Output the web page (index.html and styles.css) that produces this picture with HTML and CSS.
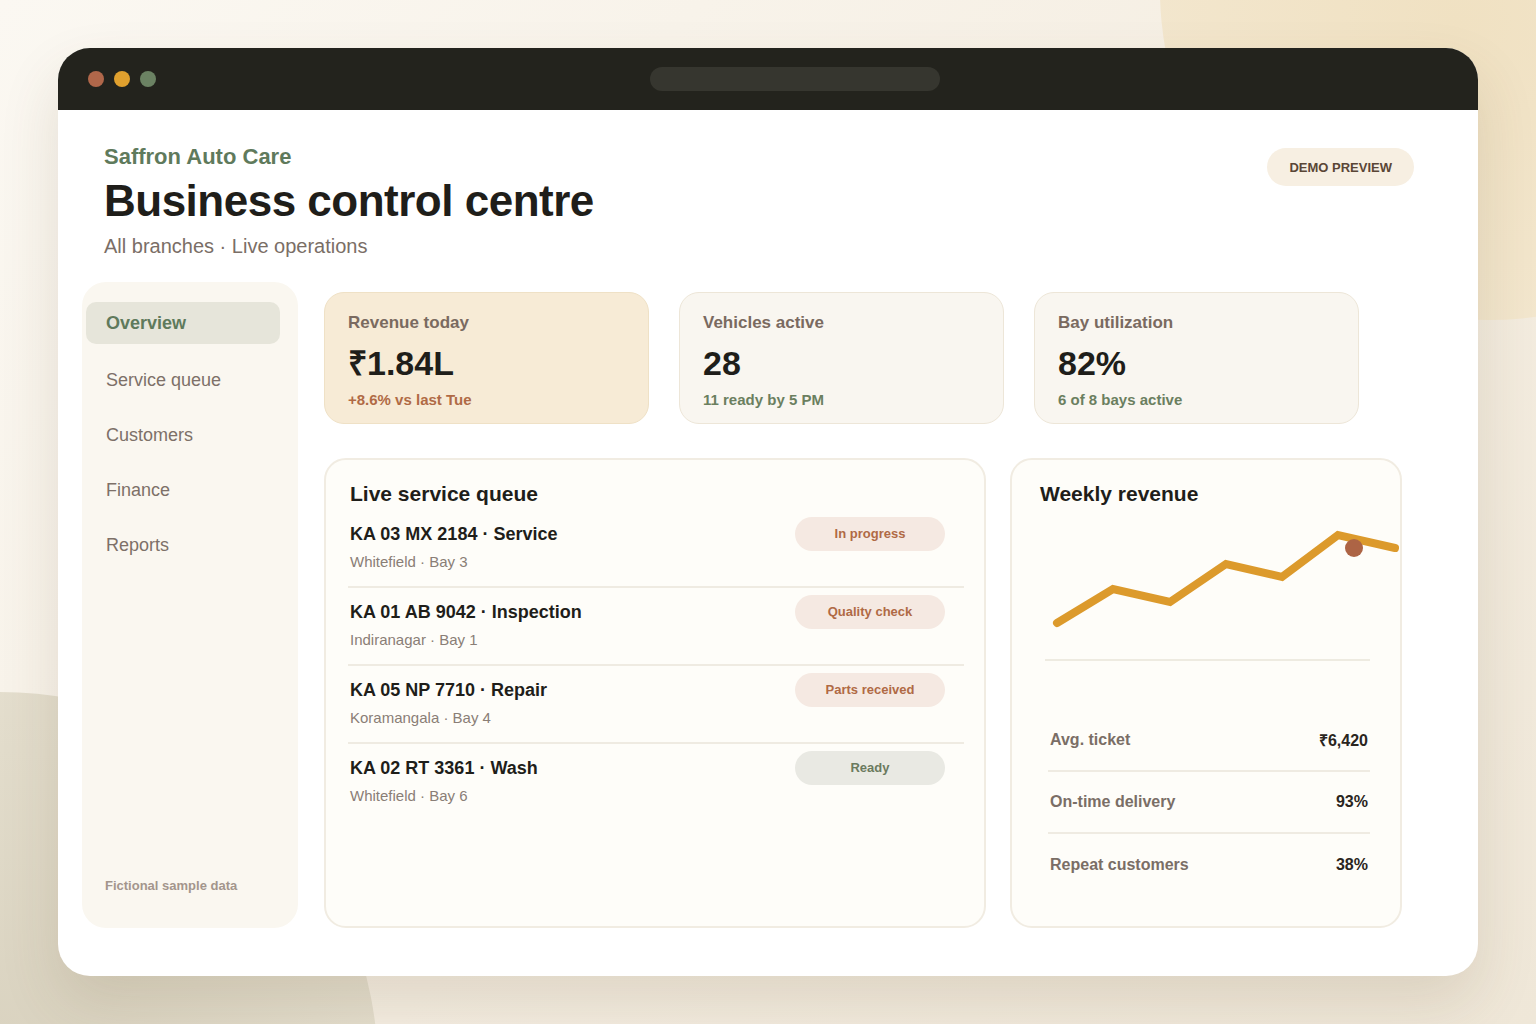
FILE: index.html
```html
<!DOCTYPE html>
<html lang="en">
<head>
    <meta charset="UTF-8">
    <meta name="viewport" content="width=device-width, initial-scale=1.0">
    <title>Saffron Auto Care — Business control centre</title>
    <link rel="stylesheet" href="styles.css">
</head>
<body>

    <div class="backdrop">
        <div class="blob blob-sun"></div>
        <div class="blob blob-sand"></div>

        <div class="window">
            <!-- Window chrome -->
            <div class="titlebar">
                <div class="dots">
                    <span class="dot dot-red"></span>
                    <span class="dot dot-amber"></span>
                    <span class="dot dot-green"></span>
                </div>
                <div class="address"></div>
            </div>

            <div class="content">
                <header class="page-head">
                    <div>
                        <div class="brand">Saffron Auto Care</div>
                        <h1 class="page-title">Business control centre</h1>
                        <p class="subtitle">All branches · Live operations</p>
                    </div>
                    <span class="demo-pill">Demo preview</span>
                </header>

                <div class="layout">
                    <!-- Side navigation -->
                    <aside class="sidebar">
                        <nav class="nav">
                            <a class="nav-item active" href="#">Overview</a>
                            <a class="nav-item" href="#">Service queue</a>
                            <a class="nav-item" href="#">Customers</a>
                            <a class="nav-item" href="#">Finance</a>
                            <a class="nav-item" href="#">Reports</a>
                        </nav>
                        <div class="sidebar-note">Fictional sample data</div>
                    </aside>

                    <main class="main">
                        <!-- KPI cards -->
                        <div class="stats">
                            <div class="stat-card highlight">
                                <div class="stat-label">Revenue today</div>
                                <div class="stat-value">₹1.84L</div>
                                <div class="stat-note up">+8.6% vs last Tue</div>
                            </div>
                            <div class="stat-card">
                                <div class="stat-label">Vehicles active</div>
                                <div class="stat-value">28</div>
                                <div class="stat-note">11 ready by 5 PM</div>
                            </div>
                            <div class="stat-card">
                                <div class="stat-label">Bay utilization</div>
                                <div class="stat-value">82%</div>
                                <div class="stat-note">6 of 8 bays active</div>
                            </div>
                        </div>

                        <div class="panels">
                            <!-- Queue -->
                            <section class="panel queue">
                                <h2 class="panel-title">Live service queue</h2>
                                <ul class="queue-list">
                                    <li class="queue-row">
                                        <div>
                                            <div class="job-title">KA 03 MX 2184 · Service</div>
                                            <div class="job-meta">Whitefield · Bay 3</div>
                                        </div>
                                        <span class="badge">In progress</span>
                                    </li>
                                    <li class="queue-row">
                                        <div>
                                            <div class="job-title">KA 01 AB 9042 · Inspection</div>
                                            <div class="job-meta">Indiranagar · Bay 1</div>
                                        </div>
                                        <span class="badge">Quality check</span>
                                    </li>
                                    <li class="queue-row">
                                        <div>
                                            <div class="job-title">KA 05 NP 7710 · Repair</div>
                                            <div class="job-meta">Koramangala · Bay 4</div>
                                        </div>
                                        <span class="badge">Parts received</span>
                                    </li>
                                    <li class="queue-row">
                                        <div>
                                            <div class="job-title">KA 02 RT 3361 · Wash</div>
                                            <div class="job-meta">Whitefield · Bay 6</div>
                                        </div>
                                        <span class="badge ready">Ready</span>
                                    </li>
                                </ul>
                            </section>

                            <!-- Weekly revenue -->
                            <section class="panel weekly">
                                <h2 class="panel-title">Weekly revenue</h2>
                                <svg class="chart" width="332" height="150" viewBox="0 0 332 150">
                                    <line x1="5" y1="140" x2="330" y2="140" stroke="#eeebe1" stroke-width="2"/>
                                    <polyline points="17,103 73,69 130,82 186,44 242,57 298,15 355,28"
                                              fill="none" stroke="#dc9a2c" stroke-width="8"
                                              stroke-linecap="round" stroke-linejoin="miter"/>
                                    <circle cx="314" cy="28" r="9" fill="#ad6445"/>
                                </svg>
                                <ul class="figures">
                                    <li><span>Avg. ticket</span><strong>₹6,420</strong></li>
                                    <li><span>On-time delivery</span><strong>93%</strong></li>
                                    <li><span>Repeat customers</span><strong>38%</strong></li>
                                </ul>
                            </section>
                        </div>
                    </main>
                </div>
            </div>
        </div>
    </div>

</body>
</html>
```

FILE: styles.css
```css
* {
    box-sizing: border-box;
}
body {
    margin: 0;
    padding: 0;
    font-family: "Liberation Sans", Arial, sans-serif;
    color: #1f1e1a;
    background: #f6f0e5;
}
.backdrop {
    position: relative;
    width: 1536px;
    height: 1024px;
    overflow: hidden;
    padding: 48px 58px;
    background: linear-gradient(135deg, #fbf8f2 0%, #f5eee2 55%, #efe7d8 100%);
}

/* soft shapes behind the window */
.blob {
    position: absolute;
    border-radius: 50%;
}
.blob-sun {
    left: 1160px;
    top: -340px;
    width: 660px;
    height: 660px;
    background: radial-gradient(circle at 45% 55%, #f0e1c2 0%, #f3e7cf 70%, #f2e6cc 100%);
}
.blob-sand {
    left: -378px;
    top: 692px;
    width: 756px;
    height: 756px;
    background: radial-gradient(circle at 50% 50%, #d9d2bf 0%, #e2dccb 60%, #e8e2d3 100%);
}

.window {
    position: relative;
    width: 1420px;
    height: 928px;
    background: white;
    border-radius: 32px;
    overflow: hidden;
    box-shadow: 0 28px 60px rgba(90, 70, 35, 0.14);
    display: flex;
    flex-direction: column;
}
.titlebar {
    height: 62px;
    flex-shrink: 0;
    background: #23231d;
    display: flex;
    align-items: center;
    padding-left: 30px;
}
.dots {
    display: flex;
    gap: 10px;
}
.dot {
    width: 16px;
    height: 16px;
    border-radius: 50%;
}
.dot-red { background: #b0674a; }
.dot-amber { background: #e0a02e; }
.dot-green { background: #6b8263; }
.address {
    margin-left: 494px;
    width: 290px;
    height: 24px;
    border-radius: 12px;
    background: #36362f;
}

.content {
    flex: 1;
    display: flex;
    flex-direction: column;
}
.page-head {
    display: flex;
    justify-content: space-between;
    align-items: flex-start;
    padding: 34px 64px 0 46px;
}
.brand {
    font-size: 22px;
    line-height: 26px;
    font-weight: bold;
    color: #5f7a5c;
}
.page-title {
    margin: 6px 0 0;
    font-size: 44px;
    line-height: 50px;
    font-weight: bold;
    letter-spacing: -0.5px;
    color: #1f1e1a;
}
.subtitle {
    margin: 8px 0 0;
    font-size: 20px;
    line-height: 24px;
    color: #7a6e66;
}
.demo-pill {
    margin-top: 4px;
    padding: 2px 22px 0;
    height: 38px;
    line-height: 36px;
    border-radius: 19px;
    background: #f7efe2;
    color: #5a4636;
    font-size: 13px;
    font-weight: bold;
    text-transform: uppercase;
}

.layout {
    flex: 1;
    display: grid;
    grid-template-columns: 216px 1fr;
    gap: 26px;
    padding: 24px 76px 48px 24px;
}

/* sidebar */
.sidebar {
    background: #faf7f0;
    border-radius: 24px;
    padding: 20px 18px 35px 4px;
    display: flex;
    flex-direction: column;
}
.nav {
    display: flex;
    flex-direction: column;
    gap: 13px;
}
.nav-item {
    display: block;
    height: 42px;
    line-height: 42px;
    padding-left: 20px;
    border-radius: 10px;
    font-size: 18px;
    color: #7d7068;
    text-decoration: none;
}
.nav-item.active {
    margin-bottom: 2px;
    background: #e6e5da;
    color: #5f7a5c;
    font-weight: bold;
}
.sidebar-note {
    margin-top: auto;
    padding-left: 19px;
    font-size: 13px;
    font-weight: bold;
    color: #a3958c;
}

/* main column */
.main {
    display: flex;
    flex-direction: column;
    padding-top: 10px;
}
.stats {
    display: grid;
    grid-template-columns: repeat(3, 325px);
    gap: 30px;
}
.stat-card {
    height: 132px;
    padding: 19px 23px 0;
    border-radius: 20px;
    background: #f9f6f0;
    border: 1px solid #ede6d8;
}
.stat-card.highlight {
    background: #f7ebd6;
    border-color: #efe1c6;
}
.stat-label {
    font-size: 17px;
    line-height: 22px;
    font-weight: bold;
    color: #7a6a60;
}
.stat-value {
    margin-top: 9px;
    font-size: 34px;
    line-height: 40px;
    font-weight: bold;
    color: #1f1e1a;
}
.stat-note {
    margin-top: 8px;
    font-size: 15px;
    line-height: 18px;
    font-weight: bold;
    color: #6b7f5f;
}
.stat-note.up {
    color: #b06a45;
}

.panels {
    flex: 1;
    margin-top: 34px;
    display: grid;
    grid-template-columns: 662px 392px;
    gap: 24px;
}
.panel {
    background: #fefdf9;
    border: 2px solid #f1ece2;
    border-radius: 22px;
}
.panel-title {
    margin: 0;
    font-size: 21px;
    line-height: 26px;
    font-weight: bold;
    color: #1f1e1a;
}

/* service queue */
.queue {
    padding: 21px 20px 0 22px;
}
.queue .panel-title {
    padding-left: 2px;
}
.queue-list {
    list-style: none;
    margin: 3px 0 0;
    padding: 0;
}
.queue-row {
    display: flex;
    justify-content: space-between;
    align-items: flex-start;
    padding: 13px 19px 15px 2px;
    border-bottom: 2px solid #efebe2;
}
.queue-row:last-child {
    border-bottom: none;
}
.job-title {
    font-size: 18px;
    line-height: 22px;
    font-weight: bold;
    color: #1f1e1a;
}
.job-meta {
    margin-top: 8px;
    font-size: 15px;
    line-height: 18px;
    color: #8a7e76;
}
.badge {
    margin-top: -6px;
    width: 150px;
    height: 34px;
    line-height: 34px;
    border-radius: 17px;
    text-align: center;
    background: #f5e9e2;
    color: #b06a45;
    font-size: 13px;
    font-weight: bold;
}
.badge.ready {
    background: #e9e9e3;
    color: #6b7a5e;
}

/* weekly revenue */
.weekly {
    padding: 21px 30px 0 28px;
}
.chart {
    display: block;
    margin-top: 13px;
    overflow: visible;
}
.figures {
    list-style: none;
    margin: 40px 0 0;
    padding: 0 0 0 8px;
}
.figures li {
    display: flex;
    justify-content: space-between;
    align-items: center;
    height: 62px;
    padding: 0 2px;
    border-bottom: 2px solid #efebe2;
    font-size: 16px;
    font-weight: bold;
}
.figures li:last-child {
    border-bottom: none;
}
.figures span {
    color: #7a6e66;
}
.figures strong {
    color: #2a2520;
}
```
